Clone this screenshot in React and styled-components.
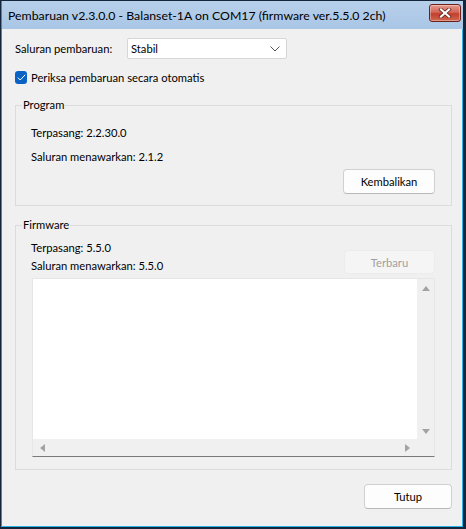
import React from "react";
import styled, { createGlobalStyle } from "styled-components";

const Global = createGlobalStyle`
  html, body { margin: 0; padding: 0; background: #f0f0f0; }
  * { box-sizing: border-box; }
  body { font-family: Lato, "Liberation Sans", Arial, sans-serif; font-size: 11.2px; color: #000; }
`;

const Window = styled.div`
  width: 466px;
  height: 529px;
  display: flex;
  flex-direction: column;
  background: #f0f0f0;
  border-style: solid;
  border-color: #14263c;
  border-width: 1px 3px 2px 1px;
  box-shadow: inset -1px -1px 0 #2fb2e6, inset 1px 0 0 #3f86cf;
`;

const TitleBar = styled.div`
  height: 28px;
  flex: none;
  display: flex;
  align-items: center;
  justify-content: space-between;
  padding: 1px 2px 0 6px;
  background: linear-gradient(#b7d0ea, #a9c6e6);
  border-left: 1px solid #3f86cf;
`;

const Title = styled.span`
  font-size: 12.3px;
  color: #000;
  white-space: nowrap;
`;

const CloseButton = styled.div`
  width: 32px;
  height: 18px;
  margin-top: -5px;
  border: 1px solid #6d1f1a;
  border-radius: 3px;
  background: linear-gradient(#e49a8f 0%, #d26656 45%, #c1402d 55%, #d0664e 100%);
  display: flex;
  align-items: center;
  justify-content: center;
  box-shadow: inset 0 0 0 1px rgba(255, 255, 255, 0.35);
`;

const Body = styled.div`
  flex: 1;
  display: flex;
  flex-direction: column;
  padding: 9px 11px 0 14px;
`;

const ChannelRow = styled.div`
  display: flex;
  align-items: center;
  height: 21px;
`;

const Label = styled.span`
  width: 112px;
  flex: none;
`;

const Combo = styled.div`
  width: 160px;
  height: 21px;
  background: #fff;
  border: 1px solid #d6d6d6;
  border-radius: 2px;
  display: flex;
  align-items: center;
  justify-content: space-between;
  padding: 0 6px 0 3px;
`;

const CheckRow = styled.label`
  display: flex;
  align-items: center;
  gap: 4px;
  height: 14px;
  margin-top: 11px;
`;

const CheckBox = styled.span`
  width: 12px;
  height: 13px;
  border-radius: 3px;
  background: #0a63c4;
  display: flex;
  align-items: center;
  justify-content: center;
`;

const Group = styled.fieldset`
  margin: ${(p) => p.$top}px 0 0 0;
  padding: 0 16px ${(p) => p.$bottom}px 15px;
  border: 1px solid #dcdcdc;
  min-width: 0;
  display: flex;
  flex-direction: column;
`;

const Legend = styled.legend`
  padding: 0 1px;
  margin-left: -9px;
  line-height: 16px;
`;

const Line = styled.div`
  line-height: 16px;
  margin-top: ${(p) => p.$top || 0}px;
`;

const Button = styled.div`
  width: ${(p) => p.$w}px;
  height: ${(p) => p.$h || 25}px;
  background: ${(p) => (p.$disabled ? "#f5f5f5" : "#fdfdfd")};
  color: ${(p) => (p.$disabled ? "#a0a0a0" : "#000")};
  border: 1px solid ${(p) => (p.$disabled ? "#ececec" : "#d0d0d0")};
  border-bottom-color: ${(p) => (p.$disabled ? "#ececec" : "#b8b8b8")};
  border-radius: 4px;
  display: flex;
  align-items: center;
  justify-content: center;
  align-self: flex-end;
  margin-top: ${(p) => p.$top || 0}px;
  flex: none;
`;

const FirmwareHead = styled.div`
  display: grid;
  grid-template-columns: 1fr auto;
  margin-top: 6px;
`;

const InfoCol = styled.div`
  padding-top: 1px;
  display: flex;
  flex-direction: column;
  gap: 2px;
`;

const TextBox = styled.div`
  margin: 4px 0 0 1px;
  height: 179px;
  display: grid;
  grid-template-columns: 1fr 17px;
  grid-template-rows: 1fr 17px;
  background: #fff;
  border: 1px solid #e6e6e6;
  border-bottom: 1px solid #7a7a7a;
`;

const TextArea = styled.div`
  background: #fff;
`;

const VScroll = styled.div`
  background: #f0f0f0;
  display: flex;
  flex-direction: column;
  justify-content: space-between;
  align-items: center;
  padding: 7px 0 5px;
`;

const HScroll = styled.div`
  background: #f0f0f0;
  display: flex;
  justify-content: space-between;
  align-items: center;
  padding: 0 7px 0 7px;
`;

const Corner = styled.div`
  background: #f0f0f0;
`;

const Footer = styled.div`
  display: flex;
  justify-content: flex-end;
  margin-top: 14px;
`;

const Arrow = ({ dir }) => {
  const pts = {
    up: "0,5 4,0 8,5",
    down: "0,0 8,0 4,5",
    left: "5,0 5,8 0,4",
    right: "0,0 5,4 0,8",
  }[dir];
  const vertical = dir === "up" || dir === "down";
  return (
    <svg width={vertical ? 8 : 5} height={vertical ? 5 : 8} viewBox={vertical ? "0 0 8 5" : "0 0 5 8"}>
      <polygon points={pts} fill="#a3a3a3" />
    </svg>
  );
};

export default function App() {
  return (
    <>
      <Global />
      <Window>
        <TitleBar>
          <Title>Pembaruan v2.3.0.0 - Balanset-1A on COM17 (firmware ver.5.5.0 2ch)</Title>
          <CloseButton>
            <svg width="14" height="10" viewBox="0 0 14 10">
              <path d="M3 1.5 L11 8.5 M11 1.5 L3 8.5" stroke="#5a1a14" strokeWidth="3.6" strokeLinecap="square" />
              <path d="M3 1.5 L11 8.5 M11 1.5 L3 8.5" stroke="#fff" strokeWidth="2.2" strokeLinecap="square" />
            </svg>
          </CloseButton>
        </TitleBar>
        <Body>
          <ChannelRow>
            <Label>Saluran pembaruan:</Label>
            <Combo>
              <span>Stabil</span>
              <svg width="10" height="6" viewBox="0 0 10 6">
                <path d="M0.5 0.5 L5 5 L9.5 0.5" stroke="#555" strokeWidth="1" fill="none" />
              </svg>
            </Combo>
          </ChannelRow>
          <CheckRow>
            <CheckBox>
              <svg width="9" height="7" viewBox="0 0 9 7">
                <path d="M0.8 3.6 L3.2 6 L8.2 0.8" stroke="#fff" strokeWidth="1" fill="none" />
              </svg>
            </CheckBox>
            <span>Periksa pembaruan secara otomatis</span>
          </CheckRow>
          <Group $top={13} $bottom={11}>
            <Legend>Program</Legend>
            <Line $top={12}>Terpasang: 2.2.30.0</Line>
            <Line $top={8}>Saluran menawarkan: 2.1.2</Line>
            <Button $w={92} $top={4}>Kembalikan</Button>
          </Group>
          <Group $top={11} $bottom={12}>
            <Legend>Firmware</Legend>
            <FirmwareHead>
              <InfoCol>
                <Line>Terpasang: 5.5.0</Line>
                <Line>Saluran menawarkan: 5.5.0</Line>
              </InfoCol>
              <Button $w={91} $h={24} $disabled>Terbaru</Button>
            </FirmwareHead>
            <TextBox>
              <TextArea />
              <VScroll>
                <Arrow dir="up" />
                <Arrow dir="down" />
              </VScroll>
              <HScroll>
                <Arrow dir="left" />
                <Arrow dir="right" />
              </HScroll>
              <Corner />
            </TextBox>
          </Group>
          <Footer>
            <Button $w={88}>Tutup</Button>
          </Footer>
        </Body>
      </Window>
    </>
  );
}
